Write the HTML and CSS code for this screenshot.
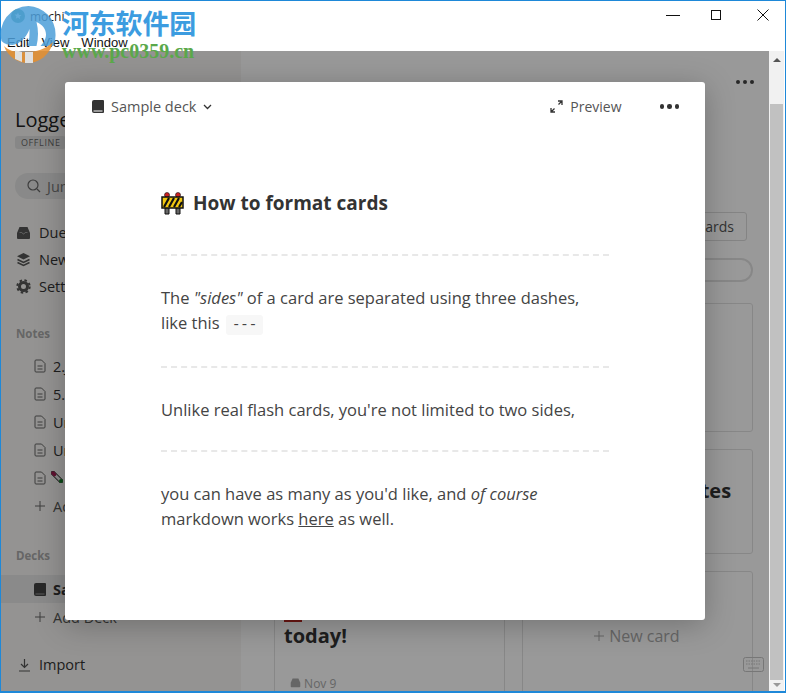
FILE: index.html
```html
<!DOCTYPE html>
<html lang="en">
<head>
    <meta charset="UTF-8">
    <meta name="viewport" content="width=device-width, initial-scale=1.0">
    <title>mochi</title>
    <link rel="stylesheet" href="styles.css">
</head>
<body>
    <div class="window">
        <!-- Title bar -->
        <header class="titlebar">
            <div class="title-left">
                <div class="app-name">
                    <svg class="app-icon" width="14" height="14" viewBox="0 0 14 14"><circle cx="7" cy="7" r="7" fill="#4f9a8c"/><path d="M7 3.5l1 2.4 2.5.2-1.9 1.6.6 2.5L7 8.4 4.800 9.700l.6-2.500-1.900-1.600 2.500-.2z" fill="#dff3e8"/></svg>
                    <span>mochi</span>
                </div>
                <nav class="menu"><span>Edit</span><span>View</span><span>Window</span></nav>
            </div>
            <div class="win-controls">
                <svg width="14" height="14" viewBox="0 0 14 14"><path d="M0 7.500h14" stroke="#111" fill="none"/></svg>
                <svg width="14" height="14" viewBox="0 0 14 14"><rect x="2.500" y="2.500" width="9" height="9" stroke="#111" fill="none"/></svg>
                <svg class="win-close" width="14" height="14" viewBox="0 0 14 14"><path d="M1.500 1.500l11 11M12.500 1.500l-11 11" stroke="#111" fill="none"/></svg>
            </div>
        </header>

        <div class="body-row">
            <div class="app">
                <aside class="sidebar">
                    <div class="logged">Logged out</div>
                    <span class="badge">OFFLINE</span>
                    <div class="jump">
                        <svg width="14" height="14" viewBox="0 0 14 14"><circle cx="6" cy="6" r="5" stroke="#666" stroke-width="1.200" fill="none"/><path d="M10 10l3 3" stroke="#666" stroke-width="1.200"/></svg>
                        <span>Jump to...</span>
                    </div>
                    <ul class="nav">
                        <li><svg width="15" height="15" viewBox="0 0 15 15"><path d="M1 8l2.500-6h8L14 8v5a1 1 0 0 1-1 1H2a1 1 0 0 1-1-1z" fill="#555"/><path d="M3.500 7.500h2.500l1 1.500h1l1-1.500h2.500" stroke="#9a9a9a" fill="none"/></svg>Due</li>
                        <li><svg width="15" height="15" viewBox="0 0 15 15"><path d="M7.500 1L14 4.200 7.500 7.400 1 4.200z" fill="#555"/><path d="M1.500 7.500l6 3 6-3M1.500 10.500l6 3 6-3" stroke="#555" stroke-width="1.500" fill="none"/></svg>New</li>
                        <li><svg width="15" height="15" viewBox="0 0 15 15"><circle cx="7.500" cy="7.500" r="4" fill="none" stroke="#555" stroke-width="3"/><circle cx="7.500" cy="7.500" r="6.200" fill="none" stroke="#555" stroke-width="2" stroke-dasharray="2.500 2.400"/></svg>Settings</li>
                    </ul>

                    <h4 class="side-label">Notes</h4>
                    <ul class="tree">
                        <li><svg class="doc" width="12" height="14" viewBox="0 0 12 14"><path d="M1 2a1 1 0 0 1 1-1h5.500L11 4.500V12a1 1 0 0 1-1 1H2a1 1 0 0 1-1-1zM3.500 7h5M3.500 10h5" stroke="#666" fill="none"/></svg>2.Jump</li>
                        <li><svg class="doc" width="12" height="14" viewBox="0 0 12 14"><path d="M1 2a1 1 0 0 1 1-1h5.500L11 4.500V12a1 1 0 0 1-1 1H2a1 1 0 0 1-1-1zM3.500 7h5M3.500 10h5" stroke="#666" fill="none"/></svg>5.Notes</li>
                        <li><svg class="doc" width="12" height="14" viewBox="0 0 12 14"><path d="M1 2a1 1 0 0 1 1-1h5.500L11 4.500V12a1 1 0 0 1-1 1H2a1 1 0 0 1-1-1zM3.500 7h5M3.500 10h5" stroke="#666" fill="none"/></svg>Untitled</li>
                        <li><svg class="doc" width="12" height="14" viewBox="0 0 12 14"><path d="M1 2a1 1 0 0 1 1-1h5.500L11 4.500V12a1 1 0 0 1-1 1H2a1 1 0 0 1-1-1zM3.500 7h5M3.500 10h5" stroke="#666" fill="none"/></svg>Untitled</li>
                        <li><svg class="doc" width="12" height="14" viewBox="0 0 12 14"><path d="M1 2a1 1 0 0 1 1-1h5.500L11 4.500V12a1 1 0 0 1-1 1H2a1 1 0 0 1-1-1zM3.500 7h5M3.500 10h5" stroke="#666" fill="none"/></svg><svg class="pill" width="12" height="12" viewBox="0 0 12 12"><path d="M2 2l8 8" stroke="#111" stroke-width="4.500" stroke-linecap="round"/><path d="M2 2l8 8" stroke="#e8e8e8" stroke-width="3" stroke-linecap="round"/><path d="M2 2l1.500 1.500" stroke="#a01c50" stroke-width="3.500" stroke-linecap="round"/><circle cx="10" cy="10" r="2" fill="#127a25"/></svg></li>
                        <li class="add"><svg width="12" height="12" viewBox="0 0 12 12"><path d="M6 1v10M1 6h10" stroke="#666" fill="none"/></svg>Add Note</li>
                    </ul>

                    <h4 class="side-label decks">Decks</h4>
                    <ul class="tree">
                        <li class="active"><svg width="12" height="13" viewBox="0 0 12 13"><path d="M2 0h9a1 1 0 0 1 1 1v11a1 1 0 0 1-1 1H2a2 2 0 0 1-2-2V2a2 2 0 0 1 2-2z" fill="#444"/><path d="M1.500 11h9" stroke="#999"/></svg>Sample deck</li>
                        <li class="add"><svg width="12" height="12" viewBox="0 0 12 12"><path d="M6 1v10M1 6h10" stroke="#666" fill="none"/></svg>Add Deck</li>
                    </ul>

                    <div class="import">
                        <svg width="13" height="14" viewBox="0 0 13 14"><path d="M6.500 1v8M3 6l3.500 3.500L10 6M1 13h11" stroke="#555" stroke-width="1.200" fill="none"/></svg>
                        Import
                    </div>
                </aside>

                <main class="content">
                    <div class="top-dots"><i></i><i></i><i></i></div>
                    <div class="cards-btn-row"><span class="cards-btn">Review cards</span></div>
                    <div class="filter"></div>
                    <div class="columns">
                        <div class="col">
                            <div class="card tall-card">
                                <div class="card-emoji"></div>
                                <div class="card-title">today!</div>
                                <div class="card-date">
                                    <svg width="11" height="11" viewBox="0 0 15 15"><path d="M1 8l2.500-6h8L14 8v5a1 1 0 0 1-1 1H2a1 1 0 0 1-1-1z" fill="#aaa"/></svg>
                                    Nov 9
                                </div>
                            </div>
                        </div>
                        <div class="col">
                            <div class="card card-a"></div>
                            <div class="card card-b"><div class="card-title">Notes</div></div>
                            <div class="card card-c">
                                <svg width="12" height="12" viewBox="0 0 12 12"><path d="M6 1v10M1 6h10" stroke="#aaa" fill="none"/></svg>
                                New card
                            </div>
                        </div>
                    </div>
                </main>

                <div class="scrim"></div>

                <svg class="keyboard" width="21" height="15" viewBox="0 0 21 15"><rect x=".5" y=".5" width="20" height="14" rx="2" fill="none" stroke="#777"/><path d="M3 4h15M3 7h15" stroke="#777" stroke-dasharray="1.500 1"/><path d="M5 11h11" stroke="#777"/></svg>

                <!-- Card editor modal -->
                <section class="modal">
                    <div class="modal-head">
                        <div class="deck-pick">
                            <svg width="12" height="13" viewBox="0 0 12 13"><path d="M2 0h9a1 1 0 0 1 1 1v11a1 1 0 0 1-1 1H2a2 2 0 0 1-2-2V2a2 2 0 0 1 2-2z" fill="#333"/><path d="M1.500 11h9" stroke="#fff"/></svg>
                            <span>Sample deck</span>
                            <svg width="9" height="6" viewBox="0 0 9 6"><path d="M1 1l3.500 3.500L8 1" stroke="#333" stroke-width="1.300" fill="none"/></svg>
                        </div>
                        <div class="head-right">
                            <div class="preview">
                                <svg width="13" height="13" viewBox="0 0 13 13"><path d="M8 1h4v4M12 1L8.500 4.500M5 12H1V8M1 12l3.500-3.500" stroke="#333" stroke-width="1.300" fill="none"/></svg>
                                <span>Preview</span>
                            </div>
                            <div class="dots"><i></i><i></i><i></i></div>
                        </div>
                    </div>
                    <article class="doc-body">
                        <h2>
                            <svg width="23" height="23" viewBox="0 0 23 23"><path d="M4 6h4v16H4zM15 6h4v16h-4z" fill="#666" stroke="#111"/><circle cx="6" cy="3" r="2.500" fill="#c22" stroke="#111" stroke-width=".6"/><circle cx="17" cy="3" r="2.500" fill="#c22" stroke="#111" stroke-width=".6"/><rect x="1" y="5" width="21" height="11" fill="#f2c811" stroke="#111" stroke-width="1.500"/><path d="M3 15l5-9M8 15l5-9M13 15l5-9M18 15l3-5" stroke="#111" stroke-width="2.200"/></svg>
                            How to format cards
                        </h2>
                        <hr>
                        <p>The <em>"sides"</em> of a card are separated using three dashes,<br>like this <code>---</code></p>
                        <hr>
                        <p>Unlike real flash cards, you're not limited to two sides,</p>
                        <hr>
                        <p>you can have as many as you'd like, and <em>of course</em><br>markdown works <u>here</u> as well.</p>
                    </article>
                </section>
            </div>

            <div class="scrollbar">
                <div class="arrow-up"></div>
                <div class="thumb"></div>
                <div class="arrow-down"></div>
            </div>
        </div>

        <!-- Download site watermark -->
        <div class="watermark">
            <svg class="wm-logo" width="57" height="58" viewBox="0 0 57 58">
                <path d="M28.500 1A28 28 0 0 0 1.500 36c3 3 7 4 11 4 8-1 14-8 17-16 0 6 0 12-2 17h9c2-8 2-16 0-24 7 3 11 9 9 16-1 3-3 6-5 8h13a28 28 0 0 0 2-12A28 28 0 0 0 28.500 1z" fill="#4d9fd9"/>
                <path d="M4 41c5 5 13 7 22 6 10 0 20-3 27-10-3 13-14 21-25 21C18 58 8 52 4 41z" fill="#e8902e"/>
                <path d="M15 45l7 2v10l-7-3zM25 47h8v11h-8z" fill="#eee"/>
            </svg>
            <div class="wm-text">
                <div class="wm-cn">河东软件园</div>
                <div class="wm-url">www.pc0359.cn</div>
            </div>
        </div>
    </div>
</body>
</html>
```

FILE: styles.css
```css
* {
    box-sizing: border-box;
}

html, body {
    margin: 0;
    height: 100%;
    overflow: hidden;
}

body {
    font-family: "Open Sans", sans-serif;
    color: #333;
    background: #fff;
}

ul {
    list-style: none;
    margin: 0;
    padding: 0;
}

.window {
    position: relative;
    width: 786px;
    height: 693px;
    display: flex;
    flex-direction: column;
    border: solid #1e88d8;
    border-width: 1px 1px 2px 1px;
    background: #fff;
}

/* title bar */
.titlebar {
    height: 50px;
    flex: none;
    display: flex;
    justify-content: space-between;
}

.title-left {
    padding: 8px 0 0 6px;
}

.app-name {
    display: flex;
    align-items: center;
    gap: 5px;
    height: 14px;
    padding-left: 4px;
    font-size: 12px;
    color: #222;
}

.menu {
    display: flex;
    gap: 12px;
    margin-top: 12px;
    font-family: "Liberation Sans", sans-serif;
    font-size: 13px;
    color: #111;
}

.win-controls {
    display: flex;
    gap: 29px;
    padding: 7px 15px 0 0;
}

.win-close {
    margin-left: 4px;
}

.body-row {
    flex: 1;
    display: flex;
    min-height: 0;
}

.app {
    position: relative;
    flex: 1;
    display: flex;
    overflow: hidden;
    background: #fff;
}

/* sidebar */
.sidebar {
    width: 240px;
    flex: none;
    padding-top: 55px;
    background: #f7f6f3;
    font-size: 14.500px;
    color: #333;
    display: flex;
    flex-direction: column;
}

.logged {
    font-size: 20px;
    line-height: 28px;
    padding-left: 14px;
    color: #222;
}

.badge {
    align-self: flex-start;
    margin: 2px 0 0 14px;
    padding: 0 6px;
    height: 13px;
    line-height: 13px;
    font-size: 9px;
    letter-spacing: .6px;
    color: #666;
    background: #e2e2e2;
    border-radius: 3px;
}

.jump {
    display: flex;
    align-items: center;
    gap: 6px;
    margin: 24px 14px 0;
    height: 26px;
    padding-left: 12px;
    border-radius: 13px;
    background: #e4e4e4;
    color: #777;
}

.nav {
    margin-top: 20px;
}

.nav li {
    display: flex;
    align-items: center;
    gap: 8px;
    height: 27px;
    padding-left: 15px;
}

.side-label {
    margin: 26px 0 10px 15px;
    font-size: 11.500px;
    line-height: 16px;
    color: #aaa;
    font-weight: 700;
}

.side-label.decks {
    margin-top: 28px;
    margin-bottom: 11px;
}

.tree li {
    display: flex;
    align-items: center;
    gap: 7px;
    height: 28px;
    padding-left: 33px;
}

.tree .active {
    background: #e6e6e6;
    font-weight: 700;
}

.tree .add {
    color: #555;
}

.pill {
    margin-left: -2px;
    margin-top: -2px;
}

.import {
    display: flex;
    align-items: center;
    gap: 8px;
    margin-top: 24px;
    padding-left: 17px;
}

/* main content, sits behind the scrim */
.content {
    flex: 1;
    padding: 29px 16px 0 33px;
    min-width: 0;
}

.top-dots {
    display: flex;
    justify-content: flex-end;
    gap: 3px;
    margin-right: -1px;
}

.top-dots i {
    width: 4px;
    height: 4px;
    border-radius: 50%;
    background: #444;
}

.cards-btn-row {
    display: flex;
    justify-content: flex-end;
    margin-top: 128px;
    padding-right: 6px;
}

.cards-btn {
    height: 29px;
    line-height: 27px;
    padding: 0 12px;
    border: 1px solid #ddd;
    border-radius: 3px;
    font-size: 14px;
    color: #555;
}

.filter {
    height: 24px;
    margin-top: 17px;
    border: 2px solid #e2e2e2;
    border-radius: 12px;
}

.columns {
    display: grid;
    grid-template-columns: 231px 231px;
    gap: 17px;
    margin-top: 21px;
}

.col {
    display: flex;
    flex-direction: column;
    gap: 17px;
}

.card {
    border: 1px solid #e2e2e2;
    border-radius: 3px;
}

.card-title {
    font-size: 20px;
    font-weight: 700;
    color: #333;
}

.tall-card {
    height: 420px;
    padding: 318px 9px 0;
}

.card-emoji {
    width: 18px;
    height: 6px;
    margin-top: -6px;
    background: #b3261e;
}

.card-date {
    margin-top: 26px;
    padding-left: 6px;
    font-size: 12px;
    color: #aaa;
}

.card-a {
    height: 129px;
}

.card-b {
    height: 105px;
    padding: 27px 0 0 149px;
}

.card-c {
    height: 130px;
    padding: 53px 0 0 70px;
    font-size: 16px;
    color: #aaa;
}

.scrim {
    position: absolute;
    inset: 0;
    background: rgba(0, 0, 0, .4);
}

.keyboard {
    position: absolute;
    left: 742px;
    top: 606px;
}

/* modal */
.modal {
    position: absolute;
    left: 64px;
    top: 31px;
    width: 640px;
    height: 538px;
    background: #fff;
    border-radius: 3px;
    box-shadow: 0 5px 30px rgba(0, 0, 0, .25);
}

.modal-head {
    display: flex;
    justify-content: space-between;
    align-items: center;
    height: 49px;
    padding: 0 26px 0 27px;
    font-size: 14px;
    color: #555;
}

.deck-pick, .preview, .head-right {
    display: flex;
    align-items: center;
}

.deck-pick {
    gap: 7px;
    font-size: 14.500px;
}

.preview {
    gap: 7px;
}

.head-right {
    gap: 38px;
}

.dots {
    display: flex;
    gap: 3px;
}

.dots i {
    width: 4.500px;
    height: 4.500px;
    border-radius: 50%;
    background: #333;
}

.doc-body {
    padding: 0 96px;
    font-size: 16.500px;
    line-height: 25px;
    color: #444;
}

.doc-body h2 {
    display: flex;
    align-items: center;
    gap: 9px;
    margin: 58px 0 37px;
    font-size: 19px;
    line-height: 28px;
    font-weight: 700;
    color: #333;
}

.doc-body hr {
    margin: 0;
    border: 0;
    border-top: 2px dashed #e8e8e8;
}

.doc-body p {
    margin: 29px 0 28px;
}

code {
    padding: 2px 6px;
    margin-left: 2px;
    font-family: "Liberation Mono", monospace;
    font-size: 14px;
    background: #f7f7f7;
    border-radius: 3px;
}

/* scrollbar */
.scrollbar {
    width: 15px;
    flex: none;
    display: flex;
    flex-direction: column;
    align-items: center;
    background: #f1f1f1;
    margin-right: 1px;
}

.arrow-up, .arrow-down {
    width: 0;
    height: 0;
    border-left: 4px solid transparent;
    border-right: 4px solid transparent;
}

.arrow-up {
    margin-top: 7px;
    border-bottom: 4px solid #555;
}

.thumb {
    width: 13px;
    flex: 1;
    margin: 42px 0 0;
    background: #c1c1c1;
}

.arrow-down {
    margin: 3px 0 4px;
    border-top: 4px solid #999;
}

/* watermark */
.watermark {
    position: absolute;
    left: -1px;
    top: 4px;
    display: flex;
    gap: 5px;
    pointer-events: none;
}

.wm-logo {
    flex: none;
    opacity: .85;
}

.wm-text {
    margin-top: 1px;
}

.wm-cn {
    font-family: "Noto Sans CJK SC", sans-serif;
    font-weight: 700;
    font-size: 27px;
    line-height: 34px;
    letter-spacing: -.2px;
    color: #3c9ce0;
}

.wm-url {
    margin-top: 1px;
    font-family: "Liberation Serif", serif;
    font-weight: 700;
    font-size: 20px;
    line-height: 20px;
    color: #5aa84a;
}
```
